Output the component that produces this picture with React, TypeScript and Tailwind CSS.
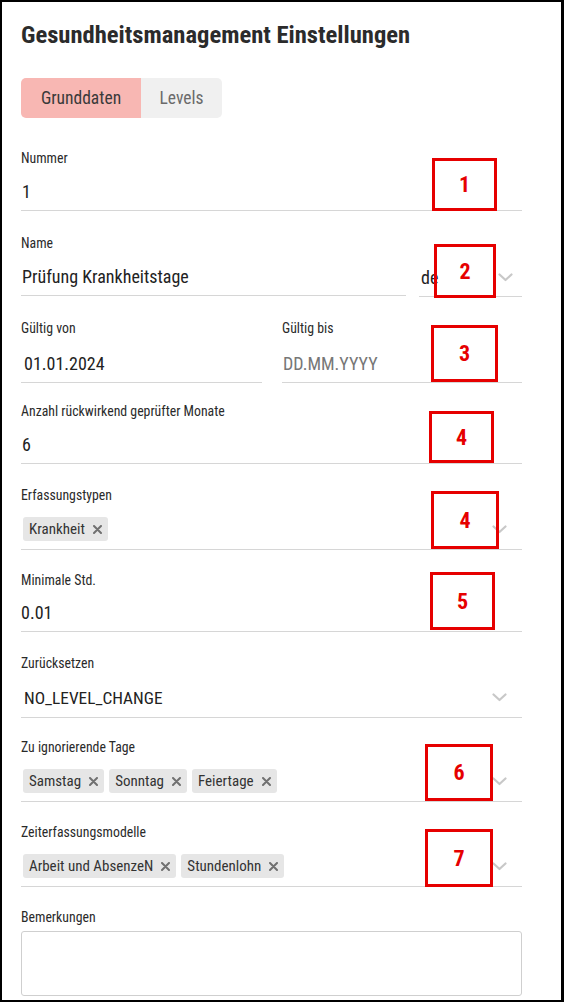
import React from "react";

const Chevron = () => (
  <svg width="15" height="9" viewBox="0 0 15 9" fill="none">
    <path d="M1.5 1.5 L7.5 7 L13.5 1.5" stroke="#c8c8c8" strokeWidth="2.2" strokeLinecap="round" strokeLinejoin="round" />
  </svg>
);

const Chip = ({ label }: { label: string }) => (
  <span className="inline-flex h-[24px] items-center gap-[8px] rounded-[3px] bg-[#e6e6e6] pl-[6px] pr-[6px] text-[15px] text-[#333]">
    <span>{label}</span>
    <svg width="9" height="9" viewBox="0 0 9 9">
      <path d="M1 1 L8 8 M8 1 L1 8" stroke="#707070" strokeWidth="2" strokeLinecap="round" />
    </svg>
  </span>
);

const Label = ({ children }: { children: React.ReactNode }) => (
  <div className="h-[18px] text-[13.8px] leading-[18px] text-[#2a2a2a]">{children}</div>
);

const Box = ({ n, className }: { n: string; className: string }) => (
  <div
    className={
      "absolute flex items-center justify-center border-[3px] border-[#e60000] text-[22px] font-bold text-[#e60000] " +
      className
    }
  >
    {n}
  </div>
);

export default function App() {
  return (
    <div className="relative h-[1002px] w-[564px] overflow-hidden border-b-2 border-l-2 border-r-[3px] border-t-2 border-black bg-white font-['Roboto',sans-serif] [font-stretch:condensed]">
      <div className="pl-[19px] pr-[39px] pt-[19px]">
        <h1 className="h-[28px] text-[24.6px] font-bold leading-[28px] text-[#2b2b2b]">
          Gesundheitsmanagement Einstellungen
        </h1>
        <div className="mt-[29px] flex h-[40px] w-[201px] overflow-hidden rounded-[5px] text-[17.5px]">
          <div className="flex w-[120px] items-center justify-center bg-[#f8b7b3] text-[#3a3a3a]">Grunddaten</div>
          <div className="flex flex-1 items-center justify-center bg-[#f0f0f0] text-[#6a6a6a]">Levels</div>
        </div>

        {/* Nummer */}
        <div className="mt-[31px]">
          <Label>Nummer</Label>
          <div className="flex h-[44px] items-end border-b border-[#d6d6d6] pb-[8px]">
            <span className="pl-[1px] text-[18px] leading-[20px] text-[#222]">1</span>
          </div>
        </div>

        {/* Name */}
        <div className="mt-[23px] flex gap-[13px]">
          <div className="w-[385px]">
            <Label>Name</Label>
            <div className="flex h-[44px] items-end border-b border-[#d6d6d6] pb-[8px]">
              <span className="pl-[1px] text-[18px] leading-[20px] text-[#222]">Prüfung Krankheitstage</span>
            </div>
          </div>
          <div className="flex-1 pt-[18px]">
            <div className="flex h-[45px] items-end justify-between border-b border-[#d6d6d6] pb-[8px] pl-[2px] pr-[9px]">
              <span className="text-[18px] leading-[20px] text-[#222]">de</span>
              <span className="mb-[6px]">
                <Chevron />
              </span>
            </div>
          </div>
        </div>

        {/* Gültig */}
        <div className="mt-[22px] flex gap-[20px]">
          <div className="w-[241px]">
            <Label>Gültig von</Label>
            <div className="flex h-[46px] items-end border-b border-[#d6d6d6] pb-[8px]">
              <span className="pl-[3px] text-[18px] leading-[20px] text-[#222]">01.01.2024</span>
            </div>
          </div>
          <div className="flex-1">
            <Label>Gültig bis</Label>
            <div className="flex h-[46px] items-end border-b border-[#d6d6d6] pb-[8px]">
              <span className="pl-[1px] text-[18px] leading-[20px] text-[#777]">DD.MM.YYYY</span>
            </div>
          </div>
        </div>

        {/* Anzahl */}
        <div className="mt-[19px]">
          <Label>Anzahl rückwirkend geprüfter Monate</Label>
          <div className="flex h-[44px] items-end border-b border-[#d6d6d6] pb-[8px]">
            <span className="pl-[1px] text-[18px] leading-[20px] text-[#222]">6</span>
          </div>
        </div>

        {/* Erfassungstypen */}
        <div className="mt-[22px]">
          <Label>Erfassungstypen</Label>
          <div className="flex h-[46px] items-end justify-between border-b border-[#d6d6d6] pb-[8px] pl-[2px] pr-[15px]">
            <Chip label="Krankheit" />
            <span className="mb-[7px]">
              <Chevron />
            </span>
          </div>
        </div>

        {/* Minimale Std. */}
        <div className="mt-[21px]">
          <Label>Minimale Std.</Label>
          <div className="flex h-[43px] items-end border-b border-[#d6d6d6] pb-[8px]">
            <span className="text-[18px] leading-[20px] text-[#222]">0.01</span>
          </div>
        </div>

        {/* Zurücksetzen */}
        <div className="mt-[22px]">
          <Label>Zurücksetzen</Label>
          <div className="flex h-[46px] items-end justify-between border-b border-[#d6d6d6] pb-[9px] pl-[3px] pr-[15px]">
            <span className="text-[17.3px] leading-[20px] text-[#222]">NO_LEVEL_CHANGE</span>
            <span className="mb-[6px]">
              <Chevron />
            </span>
          </div>
        </div>

        {/* Zu ignorierende Tage */}
        <div className="mt-[20px]">
          <Label>Zu ignorierende Tage</Label>
          <div className="flex h-[46px] items-end justify-between border-b border-[#d6d6d6] pb-[8px] pl-[2px] pr-[15px]">
            <div className="flex gap-[5px]">
              <Chip label="Samstag" />
              <Chip label="Sonntag" />
              <Chip label="Feiertage" />
            </div>
            <span className="mb-[7px]">
              <Chevron />
            </span>
          </div>
        </div>

        {/* Zeiterfassungsmodelle */}
        <div className="mt-[21px]">
          <Label>Zeiterfassungsmodelle</Label>
          <div className="flex h-[46px] items-end justify-between border-b border-[#d6d6d6] pb-[8px] pl-[2px] pr-[15px]">
            <div className="flex gap-[5px]">
              <Chip label="Arbeit und AbsenzeN" />
              <Chip label="Stundenlohn" />
            </div>
            <span className="mb-[7px]">
              <Chevron />
            </span>
          </div>
        </div>

        {/* Bemerkungen */}
        <div className="mt-[21px]">
          <Label>Bemerkungen</Label>
          <div className="mt-[5px] h-[65px] rounded-[3px] border border-[#cfcfcf]" />
        </div>
      </div>

      <Box n="1" className="left-[430px] top-[156px] h-[53px] w-[65px]" />
      <Box n="2" className="left-[432px] top-[242px] h-[54px] w-[62px]" />
      <Box n="3" className="left-[429px] top-[323px] h-[57px] w-[67px]" />
      <Box n="4" className="left-[427px] top-[409px] h-[52px] w-[65px]" />
      <Box n="4" className="left-[429px] top-[489px] h-[58px] w-[68px]" />
      <Box n="5" className="left-[428px] top-[570px] h-[58px] w-[65px]" />
      <Box n="6" className="left-[423px] top-[742px] h-[57px] w-[68px]" />
      <Box n="7" className="left-[423px] top-[827px] h-[58px] w-[68px]" />
    </div>
  );
}
